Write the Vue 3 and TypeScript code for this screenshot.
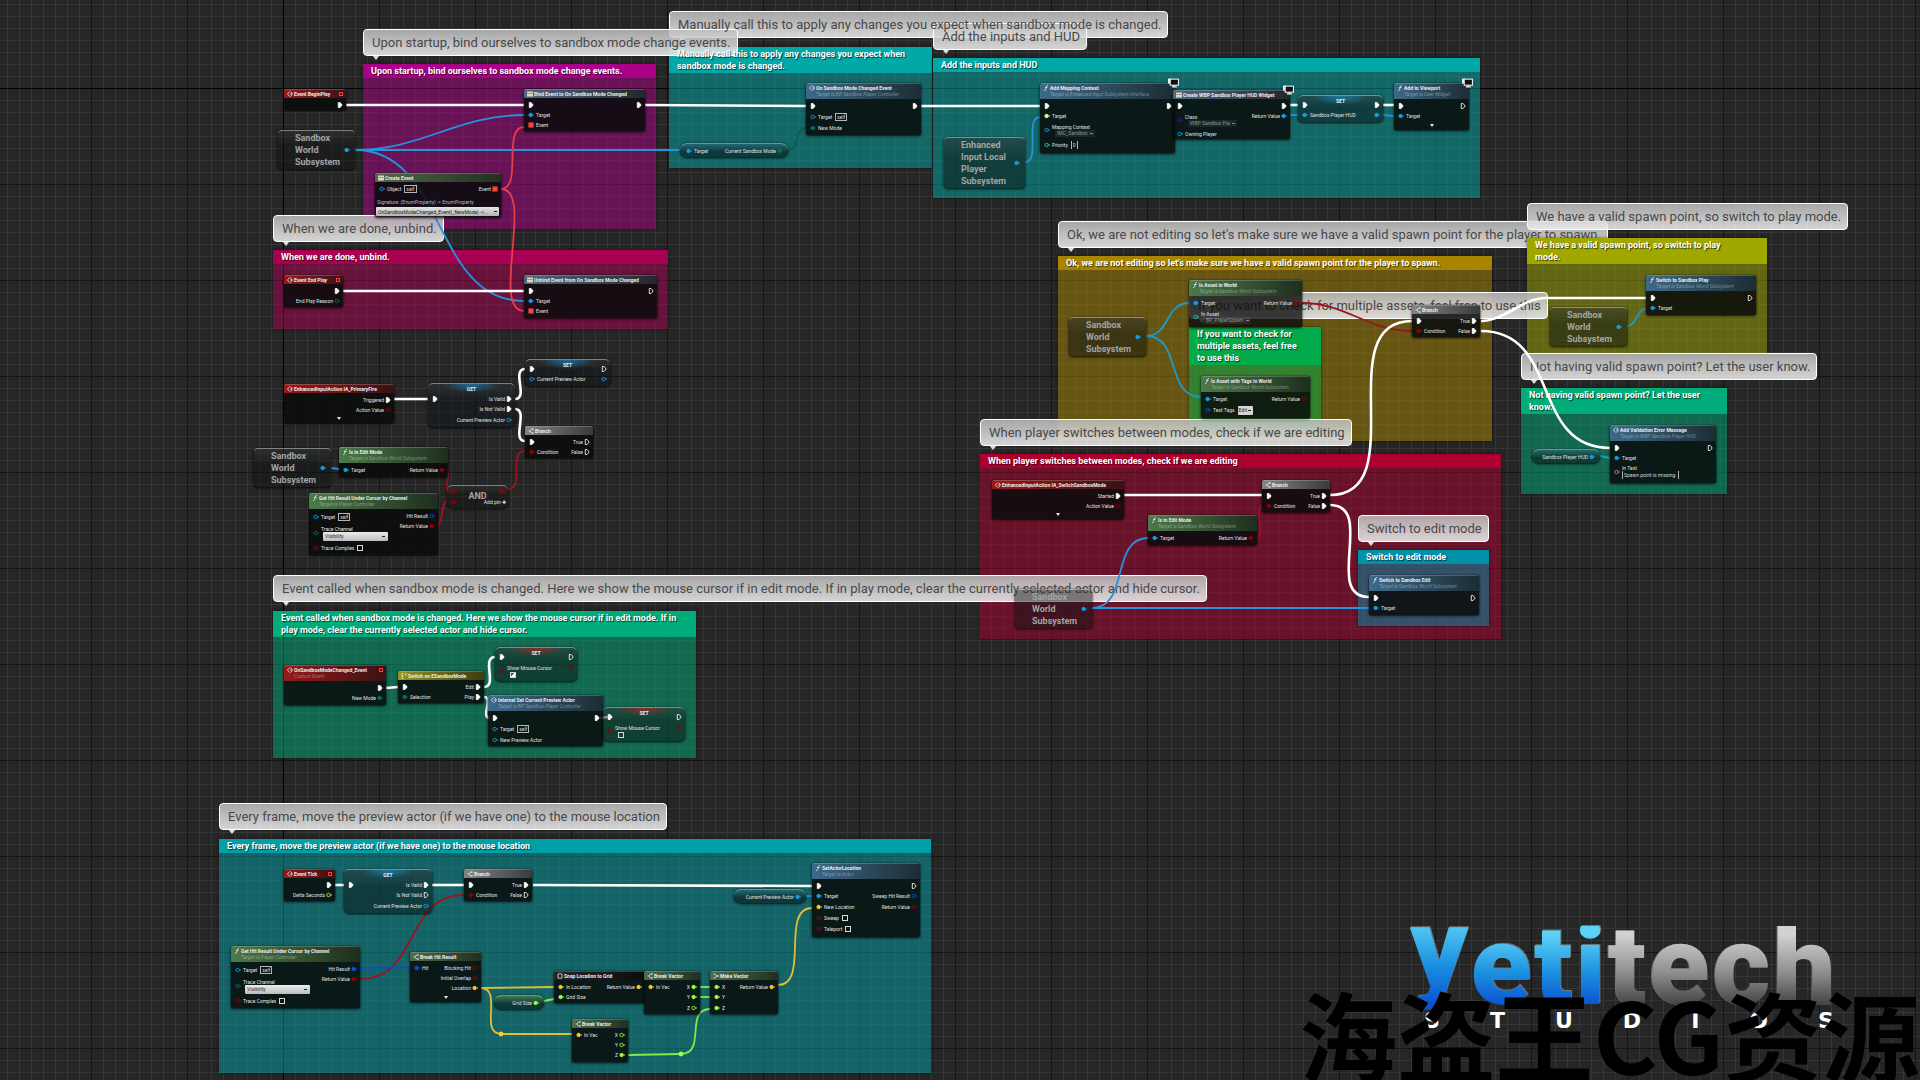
<script setup lang="ts">
type PinKind = 'exec' | 'data' | 'event' | 'none'

interface Pin {
  text?: string
  kind?: PinKind
  open?: boolean
  color?: string
  tall?: boolean
  value?: string
  input?: string
  pick?: string
  wide?: boolean
  edit?: string
  check?: boolean
}

interface GraphNode {
  x: number
  y: number
  w: number
  h: number
  type: string
  title: string
  sub?: string
  icon?: string
  left?: Pin[]
  right?: Pin[]
  more?: boolean
  badge?: boolean
  flag?: boolean
  signature?: string
  handler?: string
}

interface Comment {
  x: number
  y: number
  w: number
  h: number
  color: string
  text: string
  front?: boolean
}

interface Bubble {
  x: number
  y: number
  text: string
  back?: boolean
}

const BLUE = '#149fe6'
const RED = '#920101'
const CRIMSON = '#ff4040'
const TEAL = '#0a6e5c'
const GOLD = '#ffca23'
const LIME = '#9cff45'
const NAVY = '#0b55d0'

const ex = (text = '', open = false): Pin => ({ kind: 'exec', text, open })
const dt = (text: string, color: string, open = false, extra: Partial<Pin> = {}): Pin => ({ kind: 'data', text, color, open, ...extra })

const comments: Comment[] = [
  { x: 363, y: 64, w: 293, h: 165, color: '168, 0, 134', text: 'Upon startup, bind ourselves to sandbox mode change events.' },
  { x: 273, y: 250, w: 395, h: 79, color: '168, 0, 82', text: 'When we are done, unbind.' },
  { x: 669, y: 47, w: 263, h: 121, color: '0, 168, 168', text: 'Manually call this to apply any changes you expect when sandbox mode is changed.' },
  { x: 933, y: 58, w: 547, h: 140, color: '0, 168, 168', text: 'Add the inputs and HUD' },
  { x: 1058, y: 256, w: 434, h: 185, color: '168, 132, 0', text: "Ok, we are not editing so let's make sure we have a valid spawn point for the player to spawn." },
  { x: 1189, y: 327, w: 132, h: 106, color: '0, 172, 74', text: 'If you want to check for multiple assets, feel free to use this' },
  { x: 1527, y: 238, w: 240, h: 115, color: '160, 168, 0', text: 'We have a valid spawn point, so switch to play mode.', front: true },
  { x: 1521, y: 388, w: 206, h: 106, color: '0, 172, 122', text: 'Not having valid spawn point? Let the user know.' },
  { x: 980, y: 454, w: 521, h: 185, color: '172, 0, 46', text: 'When player switches between modes, check if we are editing' },
  { x: 1358, y: 550, w: 131, h: 76, color: '0, 144, 168', text: 'Switch to edit mode' },
  { x: 273, y: 611, w: 423, h: 147, color: '0, 172, 122', text: 'Event called when sandbox mode is changed. Here we show the mouse cursor if in edit mode. If in play mode, clear the currently selected actor and hide cursor.' },
  { x: 219, y: 839, w: 712, h: 234, color: '0, 160, 168', text: 'Every frame, move the preview actor (if we have one) to the mouse location' },
]

const bubbles: Bubble[] = [
  { x: 669, y: 11, text: 'Manually call this to apply any changes you expect when sandbox mode is changed.' },
  { x: 933, y: 23, text: 'Add the inputs and HUD' },
  { x: 363, y: 29, text: 'Upon startup, bind ourselves to sandbox mode change events.' },
  { x: 273, y: 215, text: 'When we are done, unbind.' },
  { x: 1058, y: 221, text: "Ok, we are not editing so let's make sure we have a valid spawn point for the player to spawn.", back: true },
  { x: 1189, y: 292, text: 'If you want to check for multiple assets, feel free to use this' },
  { x: 1527, y: 203, text: 'We have a valid spawn point, so switch to play mode.' },
  { x: 1521, y: 353, text: 'Not having valid spawn point? Let the user know.' },
  { x: 980, y: 419, text: 'When player switches between modes, check if we are editing' },
  { x: 1358, y: 515, text: 'Switch to edit mode' },
  { x: 273, y: 575, text: 'Event called when sandbox mode is changed. Here we show the mouse cursor if in edit mode. If in play mode, clear the currently selected actor and hide cursor.' },
  { x: 219, y: 803, text: 'Every frame, move the preview actor (if we have one) to the mouse location' },
]

const subsystem = (x: number, y: number): GraphNode => ({
  x, y, w: 77, h: 39, type: 'variable', title: 'Sandbox World Subsystem', right: [dt('', BLUE)],
})

const branch = (x: number, y: number, openTrue: boolean, openFalse: boolean): GraphNode => ({
  x, y, w: 68, h: 32, type: 'flow', title: 'Branch', icon: 'branch',
  left: [ex(), dt('Condition', RED)],
  right: [ex('True', openTrue), ex('False', openFalse)],
})

const hitResult = (x: number, y: number, used: boolean): GraphNode => ({
  x, y, w: 129, h: 62, type: 'pure', title: 'Get Hit Result Under Cursor by Channel', sub: 'Target is Player Controller', icon: 'func',
  left: [
    dt('Target', BLUE, true, { tall: true, value: 'self' }),
    dt('Trace Channel', TEAL, true, { pick: 'Visibility', wide: true }),
    dt('Trace Complex', RED, true, { check: false }),
  ],
  right: [dt('Hit Result', NAVY, !used), dt('Return Value', RED)],
})

const cursorSetter = (x: number, y: number, on: boolean): GraphNode => ({
  x, y, w: 82, h: 34, type: 'setter warm', title: 'SET',
  left: [ex(), dt('Show Mouse Cursor', '#6b1010', false, { check: on, wide: true })],
  right: [ex('', true), dt('', '#6b1010')],
})

const nodes: GraphNode[] = [
  { x: 284, y: 89, w: 62, h: 21, type: 'event', title: 'Event BeginPlay', icon: 'event', flag: true, right: [ex()] },
  subsystem(278, 130),
  { x: 524, y: 89, w: 121, h: 42, type: 'bind', title: 'Bind Event to On Sandbox Mode Changed', icon: 'sheet', left: [ex(), dt('Target', BLUE), { kind: 'event', text: 'Event', color: CRIMSON }], right: [ex()] },
  { x: 375, y: 173, w: 126, h: 44, type: 'struct', title: 'Create Event', icon: 'sheet', left: [dt('Object', BLUE, true, { value: 'self' })], right: [{ kind: 'event', text: 'Event', color: CRIMSON }], signature: 'Signature: (EnumProperty) -> EnumProperty', handler: 'OnSandboxModeChanged_Event(_NewMode) ->...' },
  { x: 284, y: 275, w: 59, h: 32, type: 'event', title: 'Event End Play', icon: 'event', flag: true, right: [ex(), dt('End Play Reason', TEAL, true)] },
  { x: 524, y: 275, w: 133, h: 43, type: 'bind', title: 'Unbind Event from On Sandbox Mode Changed', icon: 'sheet', left: [ex(), dt('Target', BLUE), { kind: 'event', text: 'Event', color: CRIMSON }], right: [ex('', true)] },
  { x: 806, y: 83, w: 115, h: 52, type: 'call', title: 'On Sandbox Mode Changed Event', sub: 'Target is BP Sandbox Player Controller', icon: 'event', left: [ex(), dt('Target', BLUE, true, { tall: true, value: 'self' }), dt('New Mode', TEAL)], right: [ex()] },
  { x: 680, y: 143, w: 108, h: 14, type: 'pill', title: '', left: [dt('Target', BLUE)], right: [dt('Current Sandbox Mode', TEAL)] },
  { x: 944, y: 137, w: 81, h: 51, type: 'variable', title: 'Enhanced Input Local Player Subsystem', right: [dt('', BLUE)] },
  { x: 1040, y: 83, w: 135, h: 70, type: 'call', title: 'Add Mapping Context', sub: 'Target is Enhanced Input Subsystem Interface', icon: 'func', badge: true, left: [ex(), dt('Target', '#e4ff8a'), dt('Mapping Context', BLUE, true, { pick: 'IMC_Sandbox' }), dt('Priority', '#3fd08c', true, { tall: true, input: '0' })], right: [ex()] },
  { x: 1173, y: 90, w: 117, h: 49, type: 'bind', title: 'Create WBP Sandbox Player HUD Widget', icon: 'sheet', badge: true, left: [ex(), dt('Class', '#4a10a0', true, { pick: 'WBP Sandbox Pla' }), dt('Owning Player', BLUE, true)], right: [ex(), dt('Return Value', BLUE)] },
  { x: 1298, y: 95, w: 85, h: 27, type: 'setter', title: 'SET', left: [ex(), dt('Sandbox Player HUD', BLUE)], right: [ex(), dt('', BLUE)] },
  { x: 1394, y: 83, w: 75, h: 47, type: 'call', title: 'Add to Viewport', sub: 'Target is User Widget', icon: 'func', badge: true, more: true, left: [ex(), dt('Target', BLUE)], right: [ex('', true)] },
  subsystem(1069, 317),
  { x: 1189, y: 280, w: 113, h: 47, type: 'pure clear', title: 'Is Asset in World', sub: 'Target is Sandbox World Subsystem', icon: 'func', left: [dt('Target', BLUE), dt('In Asset', '#2fc8c8', true, { pick: 'BP_PlayerSpawn' })], right: [dt('Return Value', RED)] },
  { x: 1201, y: 376, w: 109, h: 42, type: 'pure', title: 'Is Asset with Tags in World', sub: 'Target is Sandbox World Subsystem', icon: 'func', left: [dt('Target', BLUE), dt('Test Tags', NAVY, true, { tall: true, edit: 'Edit' })], right: [dt('Return Value', RED, true)] },
  branch(1412, 305, false, false),
  { x: 1646, y: 275, w: 110, h: 40, type: 'call', title: 'Switch to Sandbox Play', sub: 'Target is Sandbox World Subsystem', icon: 'func', left: [ex(), dt('Target', BLUE)], right: [ex('', true)] },
  subsystem(1550, 307),
  { x: 1532, y: 449, w: 68, h: 14, type: 'pill', title: '', right: [dt('Sandbox Player HUD', BLUE)] },
  { x: 1610, y: 425, w: 106, h: 58, type: 'call', title: 'Add Validation Error Message', sub: 'Target is WBP Sandbox Player HUD', icon: 'event', left: [ex(), dt('Target', BLUE), dt('In Text', '#d88080', true, { input: 'Spawn point is missing.' })], right: [ex('', true)] },
  { x: 992, y: 480, w: 132, h: 39, type: 'event', title: 'EnhancedInputAction IA_SwitchSandboxMode', icon: 'event', more: true, right: [ex('Started'), dt('Action Value', RED, true)] },
  branch(1262, 480, false, false),
  { x: 1148, y: 515, w: 109, h: 30, type: 'pure', title: 'Is in Edit Mode', sub: 'Target is Sandbox World Subsystem', icon: 'func', left: [dt('Target', BLUE)], right: [dt('Return Value', RED)] },
  { x: 1369, y: 575, w: 110, h: 40, type: 'call', title: 'Switch to Sandbox Edit', sub: 'Target is Sandbox World Subsystem', icon: 'func', left: [ex(), dt('Target', BLUE)], right: [ex('', true)] },
  subsystem(1015, 589),
  { x: 284, y: 384, w: 110, h: 39, type: 'event', title: 'EnhancedInputAction IA_PrimaryFire', icon: 'event', more: true, right: [ex('Triggered'), dt('Action Value', RED, true)] },
  { x: 428, y: 383, w: 87, h: 44, type: 'getter', title: 'GET', left: [ex()], right: [ex('Is Valid'), ex('Is Not Valid'), dt('Current Preview Actor', BLUE, true, { tall: true })] },
  { x: 525, y: 359, w: 85, h: 27, type: 'setter', title: 'SET', left: [ex(), dt('Current Preview Actor', BLUE, true)], right: [ex('', true), dt('', BLUE, true)] },
  branch(525, 426, true, true),
  subsystem(254, 448),
  { x: 339, y: 447, w: 109, h: 30, type: 'pure', title: 'Is in Edit Mode', sub: 'Target is Sandbox World Subsystem', icon: 'func', left: [dt('Target', BLUE)], right: [dt('Return Value', RED)] },
  hitResult(309, 493, false),
  { x: 447, y: 485, w: 61, h: 23, type: 'math', title: 'AND', left: [dt('', RED), dt('', RED)], right: [dt('', RED), { kind: 'none', text: 'Add pin ✚' }] },
  { x: 284, y: 665, w: 102, h: 40, type: 'event', title: 'OnSandboxModeChanged_Event', sub: 'Custom Event', icon: 'event', flag: true, right: [ex(), dt('New Mode', TEAL)] },
  { x: 398, y: 671, w: 86, h: 32, type: 'switch', title: 'Switch on ESandboxMode', icon: 'switch', left: [ex(), dt('Selection', TEAL)], right: [ex('Edit'), ex('Play')] },
  cursorSetter(495, 647, true),
  { x: 488, y: 695, w: 115, h: 51, type: 'call', title: 'Internal Set Current Preview Actor', sub: 'Target is BP Sandbox Player Controller', icon: 'event', left: [ex(), dt('Target', BLUE, true, { tall: true, value: 'self' }), dt('New Preview Actor', BLUE, true)], right: [ex()] },
  cursorSetter(603, 707, false),
  { x: 284, y: 869, w: 51, h: 32, type: 'event', title: 'Event Tick', icon: 'event', flag: true, right: [ex(), dt('Delta Seconds', LIME, true)] },
  { x: 344, y: 869, w: 88, h: 44, type: 'getter', title: 'GET', left: [ex()], right: [ex('Is Valid'), ex('Is Not Valid', true), dt('Current Preview Actor', BLUE, true, { tall: true })] },
  branch(464, 869, false, true),
  hitResult(231, 946, true),
  { x: 410, y: 952, w: 71, h: 50, type: 'struct', title: 'Break Hit Result', icon: 'branch', more: true, left: [dt('Hit', NAVY)], right: [dt('Blocking Hit', RED, true), dt('Initial Overlap', RED, true), dt('Location', GOLD)] },
  { x: 494, y: 995, w: 50, h: 14, type: 'pill lime', title: '', right: [dt('Grid Size', LIME)] },
  { x: 554, y: 971, w: 91, h: 32, type: 'macro', title: 'Snap Location to Grid', icon: 'macro', left: [dt('In Location', GOLD), dt('Grid Size', LIME)], right: [dt('Return Value', GOLD)] },
  { x: 644, y: 971, w: 56, h: 43, type: 'struct', title: 'Break Vector', icon: 'branch', left: [dt('In Vec', GOLD)], right: [dt('X', LIME), dt('Y', LIME), dt('Z', LIME, true, { tall: true })] },
  { x: 710, y: 971, w: 68, h: 43, type: 'struct', title: 'Make Vector', icon: 'make', left: [dt('X', LIME), dt('Y', LIME), dt('Z', LIME, false, { tall: true })], right: [dt('Return Value', GOLD)] },
  { x: 572, y: 1019, w: 56, h: 43, type: 'struct', title: 'Break Vector', icon: 'branch', left: [dt('In Vec', GOLD)], right: [dt('X', LIME, true), dt('Y', LIME, true), dt('Z', LIME)] },
  { x: 734, y: 889, w: 72, h: 14, type: 'pill', title: '', right: [dt('Current Preview Actor', BLUE)] },
  { x: 812, y: 863, w: 108, h: 74, type: 'call', title: 'SetActorLocation', sub: 'Target is Actor', icon: 'func', left: [ex(), dt('Target', BLUE), dt('New Location', GOLD, false, { tall: true }), dt('Sweep', RED, true, { check: false }), dt('Teleport', RED, true, { tall: true, check: false })], right: [ex('', true), dt('Sweep Hit Result', NAVY, true), dt('Return Value', RED, true, { tall: true })] },
]

type Wire = [color: string, x1: number, y1: number, x2: number, y2: number, reach?: number]

const W = '#ffffff'
const B = '#2793dc'
const R = '#9c1420'

const wires: Wire[] = [
  [W, 346, 105, 524, 105], [W, 645, 105, 806, 106], [W, 921, 106, 1040, 106], [W, 1290, 105, 1298, 105], [W, 1383, 105, 1394, 105],
  [B, 355, 150, 524, 115, 66], [B, 355, 150, 680, 150], [B, 355, 150, 524, 301, 92],
  ['#ea3b48', 501, 189, 524, 127, 22], ['#ea3b48', 501, 189, 524, 311, 34],
  [W, 343, 291, 524, 291], ['#0d5d50', 788, 150, 806, 128, 12], [B, 1025, 162, 1040, 117, 16],
  [B, 1290, 115, 1298, 115], [B, 1383, 115, 1394, 116],
  ['#2299c8', 1146, 336, 1189, 303, 24], ['#2299c8', 1146, 336, 1201, 397, 36],
  [R, 1302, 303, 1412, 331, 44], [W, 1330, 495, 1412, 321, 84], [W, 1481, 321, 1546, 298, 24], [W, 1546, 298, 1646, 298],
  [W, 1481, 331, 1610, 448, 80], ['#2299c8', 1627, 326, 1646, 309, 10], ['#2299c8', 1600, 456, 1610, 458],
  [W, 1124, 495, 1262, 495], [W, 1330, 505, 1369, 597, 46], [R, 1257, 538, 1262, 506, 8],
  [B, 1092, 608, 1148, 538, 38], [B, 1092, 608, 1369, 608],
  [W, 394, 399, 428, 399], [W, 515, 399, 525, 369, 14], [W, 515, 409, 525, 441, 14], [B, 331, 468, 339, 469],
  [R, 446, 469, 449, 492, 6], [R, 437, 526, 447, 501, 6], [R, 508, 489, 525, 451, 18],
  [W, 386, 688, 398, 687], [W, 484, 687, 495, 657, 14], [W, 484, 697, 490, 718, 10], [W, 600, 718, 608, 717],
  [W, 335, 885, 344, 885], [W, 432, 885, 464, 885], [W, 533, 885, 812, 886], [R, 360, 979, 464, 895, 60],
  ['#0f50b8', 360, 968, 410, 967], ['#e0c030', 481, 988, 554, 987], ['#e0c030', 481, 988, 501, 1034, 22], ['#e0c030', 501, 1034, 572, 1034],
  ['#83ea4c', 544, 1001, 554, 999], ['#83ea4c', 628, 1055, 681, 1054], ['#83ea4c', 681, 1054, 710, 1009, 26],
  ['#83ea4c', 700, 987, 710, 987], ['#83ea4c', 700, 997, 710, 997], ['#e0c030', 778, 985, 812, 908, 32], [B, 806, 896, 812, 896],
]

const knots = [
  { x: 501, y: 1034, color: GOLD },
  { x: 681, y: 1054, color: LIME },
]

function path([, x1, y1, x2, y2, reach = 0]: Wire): string {
  return `M${x1} ${y1}C${x1 + reach} ${y1} ${x2 - reach} ${y2} ${x2} ${y2}`
}

function box(item: { x: number; y: number; w?: number; h?: number }) {
  return {
    left: `${item.x}px`,
    top: `${item.y}px`,
    width: item.w ? `${item.w}px` : undefined,
    minHeight: item.h ? `${item.h}px` : undefined,
  }
}
</script>

<template>
  <main class="graph">
    <section
      v-for="c in comments"
      :key="c.text"
      class="comment"
      :class="{ front: c.front }"
      :style="{ ...box(c), '--tone': c.color }"
    >
      <h2><span>{{ c.text }}</span></h2>
    </section>

    <p v-for="b in bubbles" :key="b.text" class="bubble" :class="{ back: b.back }" :style="box(b)">
      <span>{{ b.text }}</span>
    </p>

    <svg class="wires" aria-hidden="true">
      <path
        v-for="(w, i) in wires"
        :key="i"
        :d="path(w)"
        :stroke="w[0]"
        :stroke-width="w[0] === W ? 2.6 : 1.8"
        fill="none"
      />
      <circle v-for="k in knots" :key="k.x" :cx="k.x" :cy="k.y" r="2.4" :fill="k.color" />
    </svg>

    <article v-for="(n, i) in nodes" :key="i" class="node" :class="n.type" :style="box(n)">
      <header v-if="n.title" class="head">
        <svg v-if="n.icon" class="glyph" viewBox="0 0 12 12" aria-hidden="true">
          <path v-if="n.icon === 'event'" d="M5 1L1 6l4 5M7 1l4 5-4 5M7 4l2 2-2 2" />
          <path v-else-if="n.icon === 'func'" class="fn" d="M10 1C7 0 7 3 6 6S5 12 2 11M4 5h5" />
          <g v-else-if="n.icon === 'sheet'"><rect x="0" y="1" width="12" height="10" class="paper" /><path d="M0 5h12" class="fold" /></g>
          <path v-else-if="n.icon === 'branch'" d="M1 6h3l3-4h3M4 6l3 4h3M9 0l2 2-2 2M9 8l2 2-2 2" />
          <path v-else-if="n.icon === 'make'" d="M1 2h3l3 4h4M1 10h3l3-4M9 4l2 2-2 2" />
          <path v-else-if="n.icon === 'switch'" d="M5 1H2v10h3M2 6h3M8 2h3M8 4h3" />
          <path v-else d="M4 2H2v8h2M8 2h2v8H8M4 2l2-1 2 1M4 10l2 1 2-1" />
        </svg>
        <h3>{{ n.title }}</h3>
        <small v-if="n.sub">{{ n.sub }}</small>
        <i v-if="n.flag" class="flag"></i>
      </header>

      <div class="body">
        <ul v-for="side in (['left', 'right'] as const)" :key="side" :class="side">
          <li
            v-for="(p, j) in n[side] ?? []"
            :key="j"
            class="pin"
            :class="{ tall: p.tall, stack: p.pick || (p.input && !p.tall), deep: p.wide }"
          >
            <svg v-if="p.kind !== 'none'" class="dot" viewBox="0 0 14 14" aria-hidden="true">
              <path v-if="p.kind === 'exec'" d="M3 1h4l5 6-5 6H3z" :fill="p.open ? 'none' : '#fff'" stroke="#fff" stroke-width="2" />
              <rect v-else-if="p.kind === 'event'" x="1" y="1" width="12" height="12" :fill="p.color" />
              <g v-else>
                <circle cx="6" cy="7" r="4" :fill="p.open ? 'none' : p.color" :stroke="p.color" stroke-width="2" />
                <path d="M11 4l3 3-3 3z" :fill="p.color" />
              </g>
            </svg>
            <label class="tag">
              <span>{{ p.text }}</span>
              <span v-if="p.value" class="value">{{ p.value }}</span>
              <select v-if="p.pick" :aria-label="p.text"><option>{{ p.pick }}</option></select>
              <button v-if="p.edit" type="button">{{ p.edit }}</button>
              <input v-if="p.input" class="value" type="text" :value="p.input" :size="p.input.length" :aria-label="p.text" />
              <input v-if="p.check !== undefined" type="checkbox" :checked="p.check" />
            </label>
          </li>
        </ul>
      </div>

      <p v-if="n.signature" class="signature">{{ n.signature }}</p>
      <select v-if="n.handler" class="handler" aria-label="Event handler"><option>{{ n.handler }}</option></select>
      <i v-if="n.more" class="more"></i>
      <svg v-if="n.badge" class="badge" viewBox="0 0 20 18" aria-hidden="true">
        <path d="M0 1h5v9H0z" fill="#eee" />
        <rect x="4" y="2" width="15" height="11" fill="#111" stroke="#eee" stroke-width="2" />
        <path d="M10 13h3v2h3v2H7v-2h3z" fill="#eee" />
      </svg>
    </article>

    <aside class="brand" aria-label="yetitech studios">
      <div class="wordmark">
        <span class="ice rise">y</span><span class="ice">e</span><span class="ice">t</span><span class="ice">i</span><span class="stone">t</span><span class="stone">e</span><span class="stone">c</span><span class="stone">h</span>
      </div>
      <div class="studios"><span v-for="(l, i) in 'STUDIOS'" :key="i">{{ l }}</span></div>
    </aside>
    <p class="watermark">海盗王CG资源</p>
  </main>
</template>

<style>
body {
  margin: 0;
  background: #262626;
}
</style>

<style scoped>
.graph {
  position: relative;
  height: 100vh;
  overflow: hidden;
  font-family: Roboto, "Liberation Sans", sans-serif;
  font-size: 5px;
  line-height: 6px;
  color: #e2e2e2;
  background:
    linear-gradient(#000, #000) 283px 0 / 1px 100% no-repeat,
    linear-gradient(#000, #000) 0 88px / 100% 1px no-repeat,
    linear-gradient(90deg, #151515 1px, transparent 1px) 91px 0 / 96px 96px,
    linear-gradient(#151515 1px, transparent 1px) 0 88px / 96px 96px,
    linear-gradient(90deg, #353535 1px, transparent 1px) 7px 0 / 12px 12px,
    linear-gradient(#353535 1px, transparent 1px) 0 4px / 12px 12px,
    #262626;
}

h2, h3, p, ul {
  margin: 0;
  padding: 0;
  list-style: none;
}

.comment {
  position: absolute;
  background: rgba(var(--tone), 0.5);
  box-shadow: 0 0 3px #0008;
}

.comment.front { z-index: 2; }

.comment h2 {
  padding: 1px 17px 1px 8px;
  background: rgb(var(--tone));
  font-size: 9px;
  line-height: 12px;
  font-weight: 700;
  color: #fff;
  text-shadow: 1px 1px 1px #000a;
}

.comment h2 span {
  position: relative;
  z-index: 4;
}

.comment.front h2 { padding-right: 32px; }

.bubble {
  position: absolute;
  padding: 0 6px 0 8px;
  border: 1px solid transparent;
  font-size: 13px;
  line-height: 25px;
  white-space: nowrap;
  color: #484848;
}

/* The plate sits below every caption, so stacked bubbles stay readable. */
.bubble::before {
  content: "";
  position: absolute;
  z-index: 3;
  inset: -1px;
  border: 1px solid #fff;
  border-radius: 4px;
  background: linear-gradient(rgba(188, 188, 188, 0.86), rgba(236, 236, 236, 0.88));
}

.bubble span {
  position: relative;
  z-index: 4;
}

.bubble.back { z-index: 1; }

.bubble::after {
  content: "";
  position: absolute;
  left: 8px;
  top: 100%;
  border: 4px solid transparent;
  border-top: 5px solid #dcdcdc;
  border-bottom: 0;
}

.wires {
  position: absolute;
  z-index: 5;
  inset: 0;
  width: 100%;
  height: 100%;
}

.node {
  --head: linear-gradient(90deg, #34607e, #1d3340);
  position: absolute;
  z-index: 6;
  box-sizing: border-box;
  display: flex;
  flex-direction: column;
  border-radius: 2px;
  background: rgba(9, 12, 12, 0.86);
  box-shadow: 0 1px 3px #000c, 0 0 1px #000;
  white-space: nowrap;
}

.event { --head: linear-gradient(90deg, #971a1a, #3a1212); }
.call { --head: linear-gradient(90deg, #3d6a8a, #1c2c34); }
.pure { --head: linear-gradient(90deg, #4c7a4a, #1e2e1e); }
.bind { --head: linear-gradient(90deg, #4f6880, #23272c); }
.struct { --head: linear-gradient(90deg, #4d6b4a, #22301f); }
.flow { --head: linear-gradient(90deg, #848484, #3a3a3a); }
.switch { --head: linear-gradient(90deg, #96961c, #3c3c10); }
.macro { --head: linear-gradient(90deg, #262626, #0c0c0c); }
.clear { background: rgba(9, 12, 12, 0.78); }

.head {
  display: grid;
  grid-template-columns: 6px 1fr 7px;
  align-items: center;
  column-gap: 1px;
  padding: 1px 0 1px 3px;
  border-radius: 2px 2px 0 0;
  border-top: 1px solid #fff3;
  background: var(--head);
}

.head h3 {
  font-size: 5px;
  line-height: 6px;
  font-weight: 700;
  color: #ececec;
}

.head small {
  grid-column: 2;
  grid-row: 2;
  font-size: 5px;
  line-height: 7px;
  font-style: italic;
  color: #ffffff60;
}

.glyph {
  width: 6px;
  height: 6px;
  fill: none;
  stroke: #f0f0f0;
  stroke-width: 1.5;
}

.paper { fill: #ddd6bc; stroke: none; }
.fold { stroke: #8d8a7a; }

.flag {
  width: 2px;
  height: 2px;
  grid-column: 3;
  border: 1px solid #ff3b3b;
}

.body {
  display: flex;
  justify-content: space-between;
  padding-top: 2px;
}

.pin {
  display: flex;
  align-items: center;
  height: 10px;
  gap: 2px;
  padding-left: 4px;
}

.right .pin {
  flex-direction: row-reverse;
  gap: 1px;
  padding: 0 3px 0 0;
}

.pin.tall { height: 12px; }
.pin.stack { height: 18px; }
.pin.deep { height: 20px; }

.dot {
  flex: none;
  width: 6px;
  height: 6px;
}

.tag {
  display: flex;
  align-items: center;
  gap: 3px;
}

.stack .tag,
.deep .tag {
  flex-direction: column;
  align-items: flex-start;
  gap: 0;
}

.value {
  box-sizing: border-box;
  height: 8px;
  padding: 0 1px;
  border: 1px solid #b5b5b5;
  font: inherit;
  line-height: 6px;
  color: #d8d8d8;
}

input.value {
  border-width: 0 1px;
  background: none;
  field-sizing: content;
}

select {
  appearance: none;
  box-sizing: border-box;
  height: 7px;
  margin-left: 3px;
  padding: 0 7px 0 2px;
  border: 0;
  border-radius: 1px;
  background:
    linear-gradient(#888, #888) right 2px center / 3px 1px no-repeat,
    #ffffff12;
  font: inherit;
  color: #8b9393;
}

.deep select {
  width: 65px;
  height: 9px;
  margin-left: 2px;
  background:
    linear-gradient(#222, #222) right 3px center / 3px 1px no-repeat,
    linear-gradient(#ededed, #bcbcbc);
  color: #2a2a2a;
}

button {
  height: 9px;
  padding: 0 6px 0 1px;
  border: 0;
  border-radius: 1px;
  background:
    linear-gradient(#222, #222) right 2px center / 3px 1px no-repeat,
    #d6d6d6;
  font: inherit;
  color: #222;
}

input[type="checkbox"] {
  appearance: none;
  width: 6px;
  height: 6px;
  margin: 0;
  border: 1px solid #d8d8d8;
  box-sizing: border-box;
}

input[type="checkbox"]:checked {
  background: linear-gradient(135deg, #fff3 40%, #fff 40%);
}

.deep input[type="checkbox"] { margin-left: 3px; }

.signature {
  padding: 5px 0 2px 2px;
  color: #b8b8b8;
}

.handler {
  height: 9px;
  margin: 0 2px 1px 1px;
  background:
    linear-gradient(#222, #222) right 2px center / 3px 1px no-repeat,
    linear-gradient(#e6e6e6, #b4b4b4);
  color: #222;
}

.more {
  margin: auto auto 3px;
  border: 2px solid transparent;
  border-top: 3px solid #e8e8e8;
  border-bottom: 0;
}

.badge {
  position: absolute;
  right: -4px;
  top: -5px;
  width: 11px;
  height: 10px;
}

.variable,
.pill,
.getter,
.setter,
.math {
  border-top: 1px solid #ffffff70;
  border-radius: 5px;
  background: linear-gradient(#ffffff14, #0000 40%), rgba(16, 20, 20, 0.5);
}

.variable {
  flex-direction: row;
  align-items: center;
  justify-content: space-between;
  border-radius: 4px;
  white-space: normal;
}

.variable .head {
  display: block;
  width: 46px;
  padding: 0 0 0 17px;
  border: 0;
  background: none;
}

.variable h3,
.math h3 {
  font-size: 9px;
  line-height: 12px;
  color: #a4a4a4;
}

.variable .body { padding: 0; }
.variable .pin { padding-right: 5px; }

.pill {
  justify-content: center;
  border-radius: 7px;
  background: linear-gradient(#2d6a7a99, #0a1a1c99 60%);
}

.pill.lime { background: linear-gradient(#5b8a3c99, #0a1a1c99 60%); }
.pill .body { padding: 0 2px; }
.pill .right { margin-left: auto; }

.getter,
.setter {
  background:
    radial-gradient(ellipse 28px 9px at 50% 0, #178fd0aa, transparent),
    linear-gradient(#ffffff14, #0000 40%),
    rgba(12, 20, 24, 0.5);
}

.setter.warm {
  background:
    radial-gradient(ellipse 28px 8px at 50% 0, #c01818aa, transparent),
    linear-gradient(#ffffff14, #0000 40%),
    rgba(12, 20, 20, 0.5);
}

.getter .head,
.setter .head,
.math .head {
  display: block;
  height: 10px;
  padding: 0;
  border: 0;
  background: none;
  text-align: center;
}

.getter h3 { line-height: 10px; }
.setter h3 { line-height: 11px; }
.getter .body, .setter .body { padding: 0; }
.setter .head { height: 4px; }
.math .head { height: 1px; }
.math h3 { line-height: 20px; }
.math .body { padding: 0; }
.math .right .pin + .pin { padding-right: 2px; }

.warm .deep { height: 18px; }
.warm .tag { gap: 1px; }

.brand {
  position: absolute;
  z-index: 7;
  right: 84px;
  bottom: 50px;
  width: 426px;
}

.wordmark {
  display: flex;
  justify-content: space-between;
  font-size: 112px;
  line-height: 80px;
  font-weight: 900;
}

.ice,
.stone {
  padding-bottom: 6px;
  background: linear-gradient(#5cd2f7 10%, #1b8fe0 55%, #0a4fd0 95%);
  background-clip: text;
  color: transparent;
  filter: drop-shadow(1px -1px 0 #bfeaff66);
}

.stone {
  background-image: linear-gradient(#d2d2d2 10%, #8d8d8d 55%, #3c3c3c 95%);
  filter: drop-shadow(-1px 0 0 #ffffff55);
}

.rise {
  margin-top: -18px;
  padding-bottom: 24px;
}

.studios {
  display: flex;
  justify-content: space-between;
  padding: 0 2px 0 14px;
  font-family: "DejaVu Sans", sans-serif;
  font-size: 22px;
  line-height: 18px;
  font-weight: 700;
  color: #fff;
}

.watermark {
  position: absolute;
  z-index: 8;
  right: 0;
  bottom: -2px;
  font-family: "Noto Sans CJK SC", sans-serif;
  font-size: 98px;
  line-height: 100px;
  font-weight: 700;
  white-space: nowrap;
  color: #000;
}
</style>
